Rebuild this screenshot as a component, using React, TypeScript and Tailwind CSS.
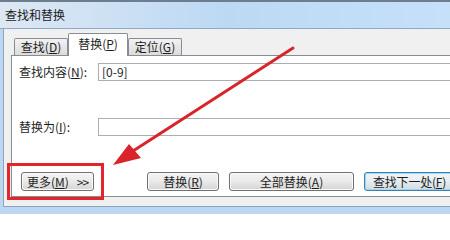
import React from "react"

const font = { fontFamily: '"Noto Sans CJK SC", "Noto Sans", sans-serif' }

function Key({ k }: { k: string }) {
  return <span className="underline underline-offset-1">{k}</span>
}

function Tab({ label, k, active }: { label: string; k: string; active?: boolean }) {
  if (active) {
    return (
      <div className="relative z-10 -mb-px flex h-[23px] w-[60px] items-start justify-center rounded-t-[2px] border border-b-0 border-[#898c95] bg-white pt-[3px] text-[12px] leading-[14px] text-[#1e1e1e]">
        {label}(<Key k={k} />)
      </div>
    )
  }
  return (
    <div className="flex h-[17px] w-[54px] items-center justify-center rounded-t-[2px] border border-b-0 border-[#898c95] bg-gradient-to-b from-[#f2f2f2] to-[#dcdcdc] text-[12px] leading-[14px] text-[#1e1e1e]">
      {label}(<Key k={k} />)
    </div>
  )
}

function Btn({ children, w, primary }: { children: React.ReactNode; w: string; primary?: boolean }) {
  return (
    <div
      className={
        "flex h-[19px] shrink-0 items-center rounded-[3px] border bg-gradient-to-b text-[12px] leading-[14px] text-[#1e1e1e] " +
        w +
        (primary
          ? " justify-start pl-[8px] tracking-[-0.2px] border-[#3c7fb1] from-[#f1f5f8] via-[#e6ecf0] to-[#d3dbe0] shadow-[inset_0_0_0_1px_#9fd7f3]"
          : " justify-center border-[#707070] from-[#f5f5f5] via-[#e9e9e9] to-[#d4d4d4] shadow-[inset_0_0_0_1px_#fbfbfb]")
      }
    >
      {children}
    </div>
  )
}

export default function App() {
  return (
    <div className="relative h-[214px] w-[450px] overflow-hidden bg-[#bcd7f1]" style={font}>
      {/* title bar */}
      <div className="flex h-[29px] items-center border-t-2 border-b border-t-[#6b7d8f] border-b-[#8fa9c4] bg-gradient-to-r from-[#dde8f3] via-[#bcd9f4] to-[#c6e0fa] pl-[5px] text-[12px] text-[#1b1b1b]">
        查找和替换
      </div>

      {/* body */}
      <div className="ml-[3px] flex h-[178px] flex-col border-l border-b border-[#8ea4ba] bg-[#f0f0f0] pt-[4px] pl-[7px]">
        <div className="flex h-[22px] items-end pl-[3px]">
          <Tab label="查找" k="D" />
          <Tab label="替换" k="P" active />
          <Tab label="定位" k="G" />
        </div>

        <div className="flex h-[142px] w-[480px] flex-col border border-[#898c95] bg-white pl-[7px] pt-[7px] text-[12px] text-[#1e1e1e]">
          <div className="flex h-[18px] items-center">
            <span className="w-[79px] shrink-0 leading-[14px]">
              查找内容(<Key k="N" />):
            </span>
            <div className="flex h-[18px] flex-1 items-center border border-[#abadb3] pl-[3px] leading-[14px]">[0-9]</div>
          </div>

          <div className="mt-[37px] flex h-[18px] items-center">
            <span className="w-[79px] shrink-0 leading-[14px]">
              替换为(<Key k="I" />):
            </span>
            <div className="h-[18px] flex-1 border border-[#abadb3]" />
          </div>

          <div className="mt-[36px] flex items-center pl-[2px]">
            <Btn w="w-[73px]">
              更多(<Key k="M" />)<span className="ml-[8px] tracking-[-1px]">&gt;&gt;</span>
            </Btn>
            <div className="w-[53px] shrink-0" />
            <Btn w="w-[72px]">
              替换(<Key k="R" />)
            </Btn>
            <div className="w-[10px] shrink-0" />
            <Btn w="w-[125px]">
              全部替换(<Key k="A" />)
            </Btn>
            <div className="w-[10px] shrink-0" />
            <Btn w="w-[110px]" primary>
              查找下一处(<Key k="F" />)
            </Btn>
          </div>
        </div>
      </div>

      {/* annotation overlays */}
      <div className="absolute left-[7px] top-[163px] h-[37px] w-[97px] border-[3px] border-[#e1252b]" />
      <svg className="pointer-events-none absolute inset-0" width="450" height="214" viewBox="0 0 450 214">
        <line x1="293" y1="48" x2="133" y2="151" stroke="#d8242a" strokeWidth="3" strokeLinecap="round" />
        <polygon points="113,165 129,144 141,158" fill="#d8242a" />
      </svg>
    </div>
  )
}
